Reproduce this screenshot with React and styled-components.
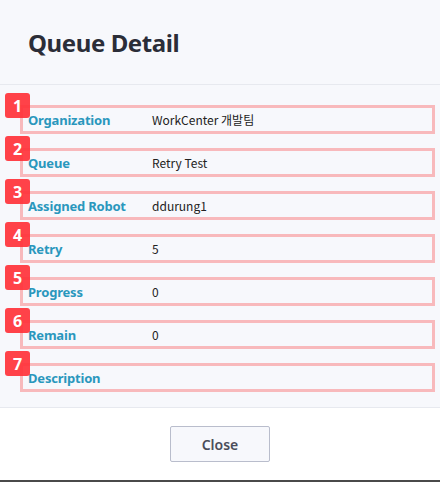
import React from "react";
import styled, { createGlobalStyle } from "styled-components";

const Global = createGlobalStyle`
  html, body { margin: 0; padding: 0; background: #ffffff; }
  body { font-family: "Noto Sans", "Noto Sans CJK KR", sans-serif; }
`;

const Dialog = styled.div`
  width: 440px;
  height: 482px;
  display: flex;
  flex-direction: column;
  background: #ffffff;
  border-bottom: 2px solid #4a4a4a;
  box-sizing: border-box;
`;

const Header = styled.div`
  height: 85px;
  box-sizing: border-box;
  background: #f7f8fc;
  border-bottom: 1px solid #e7e9ef;
  display: flex;
  align-items: center;
  padding: 0 28px 0 28px;
`;

const Title = styled.h1`
  margin: 0;
  font-size: 24px;
  font-weight: 700;
  color: #2b2d38;
  letter-spacing: -0.4px;
`;

const Body = styled.div`
  background: #f7f8fc;
  border-bottom: 1px solid #e7e9ef;
  padding: 20px 5px 15px 20px;
  display: flex;
  flex-direction: column;
  gap: 14px;
`;

const Row = styled.div`
  position: relative;
  height: 29px;
  box-sizing: border-box;
  border: 3px solid #f8b9bc;
  display: flex;
  align-items: center;
  padding-left: 5px;
`;

const Badge = styled.span`
  position: absolute;
  left: -18px;
  top: -15px;
  width: 25px;
  height: 25px;
  border-radius: 3px;
  background: rgba(255, 50, 58, 0.92);
  color: #ffffff;
  font-family: "Noto Sans", sans-serif;
  font-size: 16px;
  font-weight: 700;
  display: flex;
  align-items: center;
  justify-content: center;
`;

const Label = styled.span`
  width: 124px;
  flex: none;
  font-family: "Noto Sans", sans-serif;
  font-size: 13px;
  font-weight: 700;
  letter-spacing: -0.2px;
  color: #2a97bd;
`;

const Value = styled.span`
  font-family: "Noto Sans CJK KR", "Noto Sans", sans-serif;
  font-size: 12px;
  color: #222222;
`;

const Footer = styled.div`
  flex: 1;
  display: flex;
  justify-content: center;
  padding-top: 18px;
`;

const Button = styled.button`
  width: 100px;
  height: 36px;
  box-sizing: border-box;
  border: 1px solid #b9bdcc;
  border-radius: 2px;
  background: #f7f8fc;
  color: #4a4d5a;
  font-family: "Noto Sans", sans-serif;
  font-size: 14px;
  font-weight: 600;
  cursor: pointer;
`;

const rows = [
  ["Organization", "WorkCenter 개발팀"],
  ["Queue", "Retry Test"],
  ["Assigned Robot", "ddurung1"],
  ["Retry", "5"],
  ["Progress", "0"],
  ["Remain", "0"],
  ["Description", ""],
];

export default function App() {
  return (
    <>
      <Global />
      <Dialog>
        <Header>
          <Title>Queue Detail</Title>
        </Header>
        <Body>
          {rows.map(([label, value], i) => (
            <Row key={label}>
              <Badge>{i + 1}</Badge>
              <Label>{label}</Label>
              <Value>{value}</Value>
            </Row>
          ))}
        </Body>
        <Footer>
          <Button>Close</Button>
        </Footer>
      </Dialog>
    </>
  );
}
